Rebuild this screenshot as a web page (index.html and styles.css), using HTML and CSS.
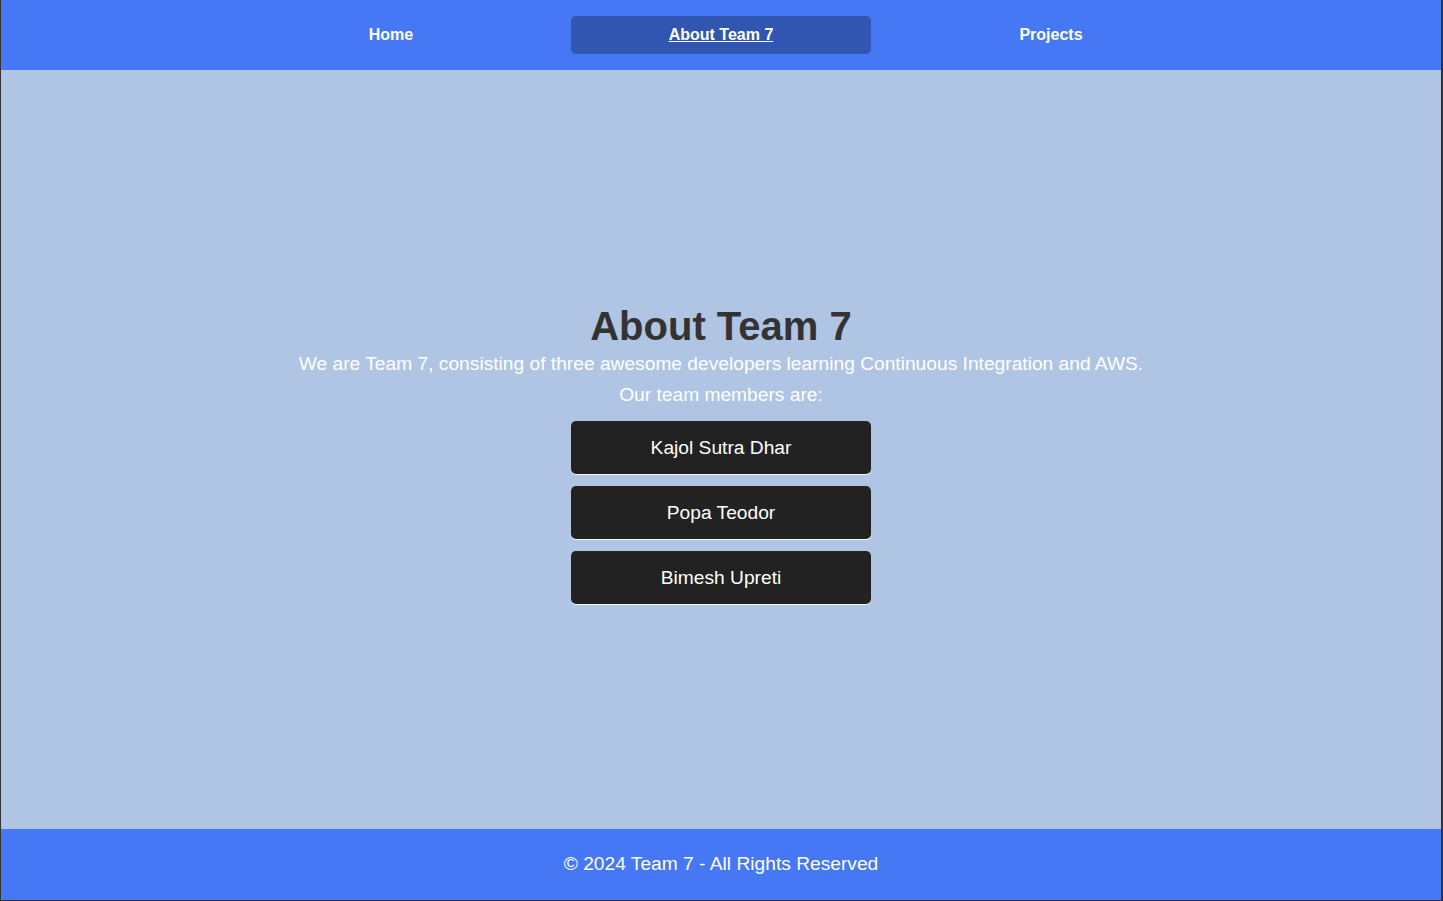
FILE: index.html
```html
<!DOCTYPE html>
<html lang="en">
<head>
<meta charset="utf-8">
<title>About Team 7</title>
<link rel="stylesheet" href="styles.css">
</head>
<body>
<div class="page">
  <nav class="nav">
    <a class="nav-link" href="#">Home</a>
    <a class="nav-link active" href="#">About Team 7</a>
    <a class="nav-link" href="#">Projects</a>
  </nav>
  <main class="main">
    <div class="content">
      <h1 class="title">About Team 7</h1>
      <p class="intro">We are Team 7, consisting of three awesome developers learning Continuous Integration and AWS.</p>
      <p class="members-label">Our team members are:</p>
      <div class="members">
        <div class="member">Kajol Sutra Dhar</div>
        <div class="member">Popa Teodor</div>
        <div class="member">Bimesh Upreti</div>
      </div>
    </div>
  </main>
  <footer class="footer">© 2024 Team 7 - All Rights Reserved</footer>
</div>
</body>
</html>
```

FILE: styles.css
```css
html, body {
  margin: 0;
  padding: 0;
  background: #333333;
  font-family: "Liberation Sans", Arial, sans-serif;
}

.page {
  margin-left: 1px;
  width: 1440px;
  height: 900px;
  display: flex;
  flex-direction: column;
}

.nav {
  height: 70px;
  background: #4678f6;
  display: flex;
  justify-content: center;
  align-items: center;
  gap: 30px;
}

.nav-link {
  width: 300px;
  height: 38px;
  display: flex;
  align-items: center;
  justify-content: center;
  color: #ffffff;
  font-weight: bold;
  font-size: 16px;
  text-decoration: none;
  border-radius: 5px;
}

.nav-link.active {
  background: #3056b2;
  text-decoration: underline;
}

.main {
  flex: 1;
  background: #b0c4e4;
  display: flex;
  align-items: center;
  justify-content: center;
  padding-top: 8px;
}

.content {
  display: flex;
  flex-direction: column;
  align-items: center;
  text-align: center;
}

.title {
  margin: 0 0 4px;
  font-size: 40px;
  line-height: 46px;
  font-weight: bold;
  color: #333333;
}

.intro {
  margin: 0 0 9px;
  font-size: 19.2px;
  line-height: 22px;
  color: #ffffff;
}

.members-label {
  margin: 0 0 15px;
  font-size: 19.2px;
  line-height: 22px;
  color: #ffffff;
}

.members {
  display: flex;
  flex-direction: column;
  gap: 12px;
}

.member {
  width: 300px;
  height: 53px;
  display: flex;
  align-items: center;
  justify-content: center;
  background: #222222;
  color: #ffffff;
  font-size: 19.2px;
  border-radius: 5px;
  box-shadow: 0 1px 0 rgba(255, 255, 255, 0.85);
}

.footer {
  height: 71px;
  box-sizing: border-box;
  padding-bottom: 2px;
  background: #4678f6;
  color: #ffffff;
  font-size: 19.2px;
  display: flex;
  align-items: center;
  justify-content: center;
}
```
